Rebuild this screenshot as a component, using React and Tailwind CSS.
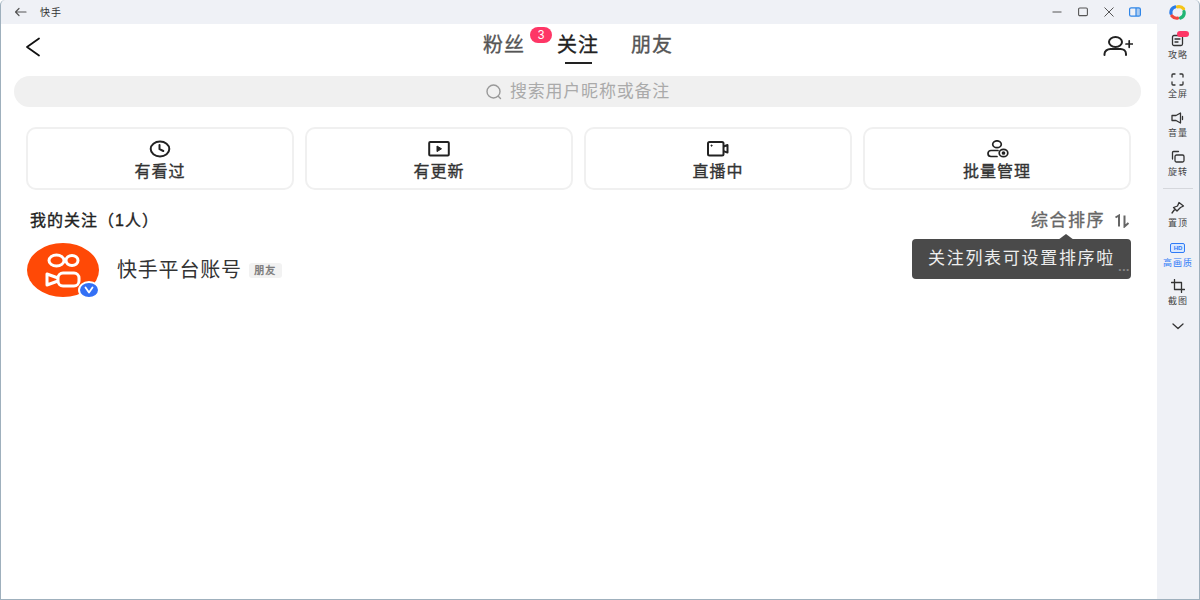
const FONT = "font-['Liberation_Sans','Noto_Sans_CJK_SC',sans-serif]";
const MEDIUM = '[-webkit-text-stroke:0.35px_currentColor]';

const Clock = () => (
  <svg width="22" height="22" viewBox="0 0 22 22" fill="none" stroke="#222" strokeWidth="2" strokeLinecap="round" strokeLinejoin="round">
    <ellipse cx="11" cy="11" rx="9.300" ry="7.400" />
    <path d="M10.500 7v4.200l3.800 1.800" />
  </svg>
);
const PlayBox = () => (
  <svg width="22" height="22" viewBox="0 0 22 22" fill="none" stroke="#222" strokeWidth="2" strokeLinejoin="round">
    <rect x="1.2" y="4" width="19.6" height="13.6" rx="1" />
    <path d="M9 8l4.5 2.8L9 13.6z" fill="#222" strokeWidth="1" />
  </svg>
);
const LiveCam = () => (
  <svg width="22" height="22" viewBox="0 0 22 22" fill="none" stroke="#222" strokeWidth="2" strokeLinejoin="round">
    <rect x="1" y="4" width="15.5" height="13.6" rx="1.5" />
    <path d="M16.5 8.5l4-1.5v7.6l-4-1.5" />
    <circle cx="4.6" cy="7.6" r="0.6" fill="#222" strokeWidth="1" />
  </svg>
);
const UserGear = () => (
  <svg width="24" height="18" viewBox="0 0 24 18" fill="none" stroke="#222" strokeWidth="1.700" strokeLinecap="round">
    <ellipse cx="12" cy="4.200" rx="4.300" ry="3.400" />
    <path d="M13 10.500H6a3 3 0 0 0 0 6h6" />
    <ellipse cx="18.500" cy="13" rx="4.300" ry="3.700" />
    <circle cx="18.500" cy="13" r="1" fill="#222" />
  </svg>
);

const FILTERS = [
  { label: '有看过', icon: <Clock /> },
  { label: '有更新', icon: <PlayBox /> },
  { label: '直播中', icon: <LiveCam /> },
  { label: '批量管理', icon: <UserGear /> },
];

const SideItem = ({ label, icon, active }) => (
  <div className={`flex flex-col items-center h-[39px] ${active ? 'text-[#2f7bf6]' : 'text-[#444]'}`}>
    <div className="h-[20px] flex items-center justify-center relative">{icon}</div>
    <div className="-mt-[1px] text-[9px] tracking-[1px] leading-[12px]">{label}</div>
  </div>
);

const sideStroke = { fill: 'none', stroke: '#333', strokeWidth: 1.3, strokeLinejoin: 'round', strokeLinecap: 'round' };

export default function App() {
  return (
    <div className={`w-[1200px] h-[600px] overflow-hidden flex flex-col bg-[#eff1f6] border-l border-r border-b border-[#9fb0bd] rounded-t-[5px] ${FONT}`}>
      {/* title bar */}
      <div className="h-6 shrink-0 flex items-center">
        <svg className="ml-[13px]" width="13" height="10" viewBox="0 0 13 10" fill="none" stroke="#555" strokeWidth="1.2" strokeLinecap="round" strokeLinejoin="round">
          <path d="M12 5H1.5M5 1.5L1.5 5 5 8.5" />
        </svg>
        <span className="ml-[13px] text-[10px] tracking-[1px] text-[#333]">快手</span>
        <div className="ml-auto flex items-center">
          <svg width="10" height="10" viewBox="0 0 10 10" stroke="#555" strokeWidth="1"><path d="M0.5 5h9" /></svg>
          <svg className="ml-[16px]" width="10" height="10" viewBox="0 0 10 10" fill="none" stroke="#555" strokeWidth="1.1"><rect x="0.6" y="1" width="8.8" height="7.6" rx="1.2" /></svg>
          <svg className="ml-[16px]" width="10" height="10" viewBox="0 0 10 10" stroke="#555" strokeWidth="1"><path d="M0.5 0.5l9 9M9.5 0.5l-9 9" /></svg>
          <svg className="ml-[15px]" width="12" height="10" viewBox="0 0 12 10" fill="none" stroke="#2f86e8" strokeWidth="1.2"><rect x="0.6" y="0.8" width="10.8" height="8.4" rx="1.5" /><rect x="7" y="1" width="4" height="8" fill="#2f86e8" fillOpacity="0.35" stroke="none" /><path d="M7 1v8" /></svg>
          <svg className="ml-[28px] mr-[13px]" width="17" height="15" viewBox="0 0 17 15" fill="none" strokeWidth="3.2" strokeLinecap="round">
            <path d="M2 8.5C1.5 5 3.5 2.8 6 2" stroke="#2b7de9" />
            <path d="M8.5 1.8c2.5-.4 4.8.4 6 2" stroke="#f5c518" />
            <path d="M15 6.5c.6 3-1 5.500-3.500 6.500" stroke="#20b673" />
            <path d="M3 11c1.500 1.800 3.500 2.400 5.500 2.200" stroke="#f0483e" />
          </svg>
        </div>
      </div>

      <div className="flex-1 flex min-h-0">
        {/* main */}
        <div className="w-[1156px] shrink-0 bg-white flex flex-col">
          <div className="h-[52px] shrink-0 flex items-center relative">
            <svg className="ml-[24px] -mt-[6px]" width="16" height="20" viewBox="0 0 16 20" fill="none" stroke="#111" strokeWidth="1.8" strokeLinecap="round" strokeLinejoin="round">
              <path d="M14 1.500L2 10l12 8.500" />
            </svg>
            <div className={`absolute left-[482px] top-0 h-full flex items-start text-[20px] tracking-[1px] leading-[24px] pt-[9px] ${MEDIUM}`}>
              <span className="text-[#555] w-[42px]">粉丝</span>
              <span className="relative text-[#222] ml-[32px] w-[44px]">
                关注
                <span className="absolute left-[8px] top-[29px] w-[27px] h-[2px] bg-[#222]" />
                <span className="absolute -left-[27px] -top-[6px] w-[22px] h-[16px] rounded-full bg-[#fe3666] text-white text-[12px] tracking-normal leading-[16px] [-webkit-text-stroke:0] text-center">3</span>
              </span>
              <span className="text-[#555] ml-[30px] w-[44px]">朋友</span>
            </div>
            <svg className="ml-auto mr-[24px] -mt-[8px]" width="30" height="20" viewBox="0 0 30 20" fill="none" stroke="#222" strokeWidth="2" strokeLinecap="round">
              <ellipse cx="12.500" cy="6" rx="6.500" ry="5" />
              <path d="M1.500 19v-1c0-3 3-5 6-5h10c3 0 5.500 2 5.500 5v1" />
              <path d="M23 8h6.500M26.200 4.800v6.500" strokeWidth="1.700" />
            </svg>
          </div>

          <div className="h-[31px] mx-[13px] w-[1127px] rounded-full bg-[#f0f0f0] flex items-center justify-center text-[17px] tracking-[0.800px] text-[#aaa]">
            <svg className="mr-[7px]" width="18" height="18" viewBox="0 0 18 18" fill="none" stroke="#999" strokeWidth="1.400" strokeLinecap="round">
              <circle cx="8.500" cy="8.500" r="6.500" />
              <path d="M13.500 13.500l2 2" />
            </svg>
            搜索用户昵称或备注
          </div>

          <div className="mt-5 ml-[25px] flex gap-[11px]">
            {FILTERS.map((f) => (
              <div key={f.label} className="w-[268px] h-[63px] rounded-[10px] border-2 border-[#f0f0f0] flex flex-col items-center pt-[9px]">
                <div className="h-[22px] flex items-center justify-center">{f.icon}</div>
                <div className={`mt-[2px] text-[16px] tracking-[1px] leading-[20px] text-[#333] ${MEDIUM}`}>{f.label}</div>
              </div>
            ))}
          </div>

          <div className="mt-[21px] ml-[29px] w-[1100px] h-[20px] flex items-center justify-between">
            <span className={`text-[16px] tracking-[1px] text-[#222] ${MEDIUM}`}>我的关注（1人）</span>
            <span className={`flex items-center text-[17px] tracking-[1.500px] text-[#666] ${MEDIUM}`}>
              综合排序
              <svg className="ml-[9px]" width="16" height="14" viewBox="0 0 16 14" fill="none" stroke="#666" strokeWidth="2">
                <path d="M1.500 3.500L5 1.500v11M10.500 1.500v11L14.500 9" />
              </svg>
            </span>
          </div>

          <div className="relative mt-[12px] ml-[26px] flex items-center h-[54px]">
            <div className="relative w-[72px] h-[54px] rounded-[50%] bg-[#ff4906] flex items-center justify-center">
              <svg width="40" height="35" viewBox="0 0 40 35" fill="none" stroke="#fff" strokeWidth="3" strokeLinejoin="round">
                <ellipse cx="13.500" cy="7.500" rx="7.500" ry="5.500" />
                <ellipse cx="29" cy="7.500" rx="6" ry="5" />
                <rect x="15" y="20" width="21" height="13" rx="5" />
                <path d="M15 25L4 21v11l11-4" />
              </svg>
              <div className="absolute -right-[1px] -bottom-[2px] w-[22px] h-[18px] rounded-[50%] bg-[#3370f5] border-2 border-white flex items-center justify-center">
                <svg width="10" height="8" viewBox="0 0 10 8" fill="none" stroke="#fff" strokeWidth="1.800" strokeLinecap="round" strokeLinejoin="round"><path d="M1.500 1.500L5 6.500l3.500-5" /></svg>
              </div>
            </div>
            <span className="ml-[18px] text-[20px] tracking-[0.800px] text-[#333]">快手平台账号</span>
            <span className={`ml-[7px] w-[33px] h-[15px] rounded-[3px] bg-[#f2f2f2] text-[10px] tracking-[1px] leading-[15px] text-center text-[#777] ${MEDIUM}`}>朋友</span>

            {/* tooltip over the row */}
            <div className="absolute left-[885px] -top-[4px] w-[219px] h-[40px] rounded-[4px] bg-[#4a4a4a] text-[17px] tracking-[1.700px] leading-[40px] text-center text-[#eee]">
              <span className="absolute left-[146px] -top-[5px] w-0 h-0 border-l-[8px] border-r-[8px] border-b-[6px] border-l-transparent border-r-transparent border-b-[#4a4a4a]" />
              关注列表可设置排序啦
              <span className="absolute right-[1px] top-[27px] text-[#888] text-[8px] tracking-[1px] leading-[8px]">•••</span>
            </div>
          </div>
        </div>

        {/* right tool bar */}
        <div className="flex-1 flex flex-col items-center pt-[6px]">
          <SideItem label="攻略" icon={
            <>
              <svg width="14" height="14" viewBox="0 0 14 14" {...sideStroke}><rect x="1.500" y="2.500" width="10" height="10" rx="1.500" /><path d="M4 6h5M4 9h3" /></svg>
              <span className="absolute -right-[4px] top-[1px] w-[12px] h-[6px] rounded-full bg-[#fe3666]" />
            </>
          } />
          <SideItem label="全屏" icon={
            <svg width="13" height="13" viewBox="0 0 13 13" {...sideStroke}><path d="M1 4V2a1 1 0 0 1 1-1h2M9 1h2a1 1 0 0 1 1 1v2M12 9v2a1 1 0 0 1-1 1H9M4 12H2a1 1 0 0 1-1-1V9" /></svg>
          } />
          <SideItem label="音量" icon={
            <svg width="14" height="12" viewBox="0 0 14 12" {...sideStroke}><path d="M1 3.500h4L9.500 1v10L5 8.500H1zM11.500 4.500v3" /></svg>
          } />
          <SideItem label="旋转" icon={
            <svg width="14" height="14" viewBox="0 0 14 14" {...sideStroke}><path d="M1.500 9V2.500a1 1 0 0 1 1-1h5" /><rect x="4" y="5" width="9" height="7" rx="1.500" /></svg>
          } />
          <div className="w-[30px] h-px bg-[#d5d7dc] mt-[2px] mb-[9px]" />
          <SideItem label="置顶" icon={
            <svg width="15" height="14" viewBox="0 0 15 14" {...sideStroke}><path d="M9 1.500l4.500 3.500-3 1.500L7 10 3.500 6.500 7.500 5zM5 8l-3 4" /></svg>
          } />
          <div className="mt-[1px]">
            <SideItem active label="高画质" icon={
              <span className="w-[15px] h-[10px] rounded-[2px] border border-[#2f7bf6] bg-[#d9e8ff] text-[6px] tracking-normal leading-[8px] font-bold text-center">HD</span>
            } />
          </div>
          <div className="-mt-[1px]">
            <SideItem label="截图" icon={
              <svg width="14" height="14" viewBox="0 0 14 14" {...sideStroke}><path d="M3.500 0.500V10.500H13.500M0.500 3.500H10.500V13.500" /></svg>
            } />
          </div>
          <svg className="mt-[8px]" width="12" height="7" viewBox="0 0 12 7" {...sideStroke}><path d="M1 1l5 4.500L11 1" /></svg>
        </div>
      </div>
    </div>
  );
}
